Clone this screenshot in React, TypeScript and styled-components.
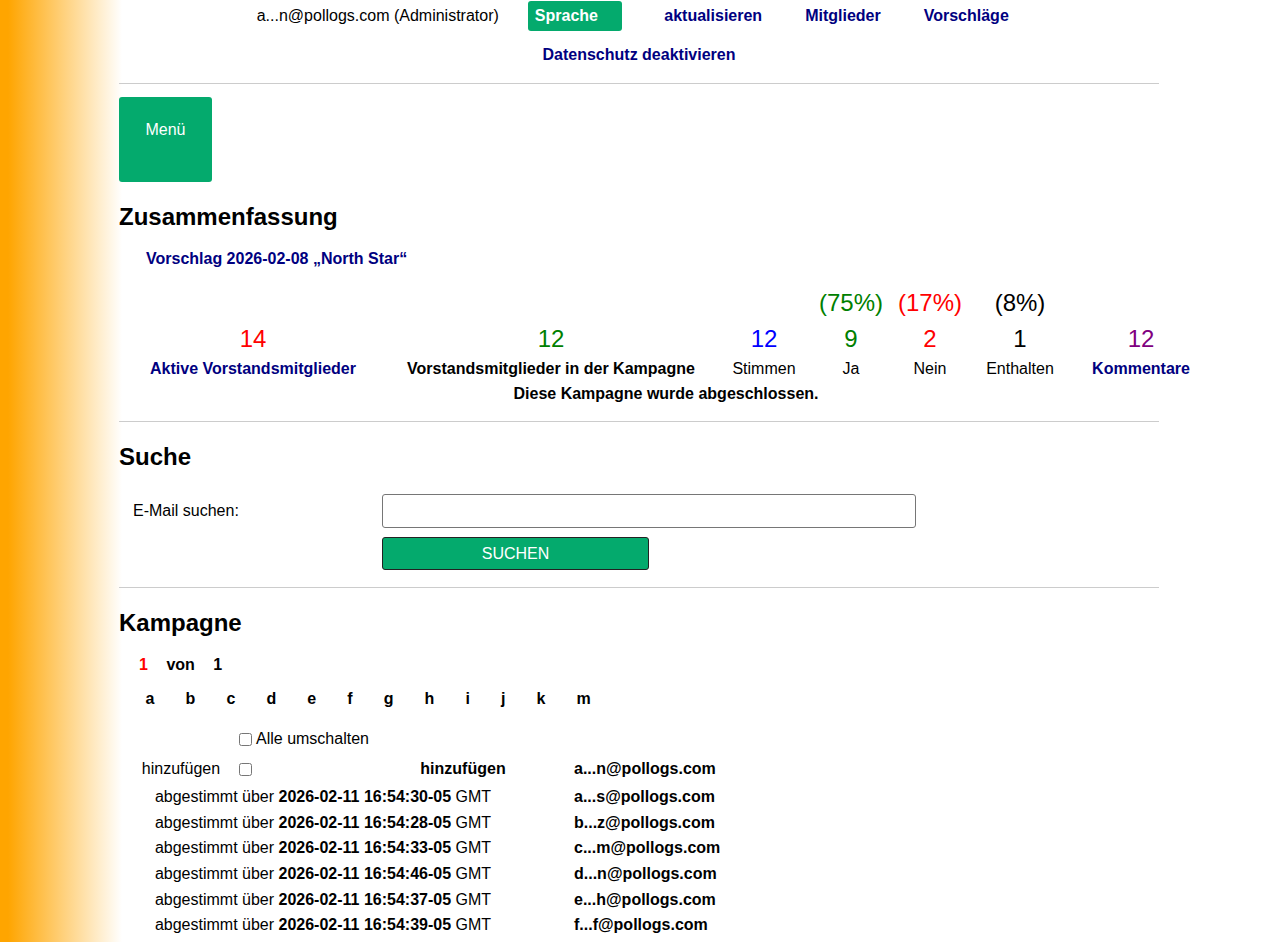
import { Fragment } from 'react'
import styled, { createGlobalStyle } from 'styled-components'

const green = '#04aa6d'
const navy = '#000080'

const GlobalStyle = createGlobalStyle`
    html, body {
        margin: 0;
        padding: 0;
        min-height: 100%;
    }
    body {
        font-family: 'Liberation Sans', Arial, sans-serif;
        font-size: 16px;
        color: #000;
        background: linear-gradient(to right, #ffa500 8px, #ffffff 122px) no-repeat;
        background-color: #fff;
        min-height: 942px;
    }
`

const stats = [
    { pct: '', num: '14', numColor: 'red', label: 'Aktive Vorstandsmitglieder', labelKind: 'link' },
    { pct: '', num: '12', numColor: 'green', label: 'Vorstandsmitglieder in der Kampagne', labelKind: 'bold' },
    { pct: '', num: '12', numColor: 'blue', label: 'Stimmen', labelKind: 'plain' },
    { pct: '(75%)', pctColor: 'green', num: '9', numColor: 'green', label: 'Ja', labelKind: 'plain' },
    { pct: '(17%)', pctColor: 'red', num: '2', numColor: 'red', label: 'Nein', labelKind: 'plain' },
    { pct: '(8%)', pctColor: 'black', num: '1', numColor: 'black', label: 'Enthalten', labelKind: 'plain' },
    { pct: '', num: '12', numColor: 'purple', label: 'Kommentare', labelKind: 'link' },
]

const letters = ['a', 'b', 'c', 'd', 'e', 'f', 'g', 'h', 'i', 'j', 'k', 'm']

const votes = [
    { time: '2026-02-11 16:54:30-05', email: 'a...s@pollogs.com' },
    { time: '2026-02-11 16:54:28-05', email: 'b...z@pollogs.com' },
    { time: '2026-02-11 16:54:33-05', email: 'c...m@pollogs.com' },
    { time: '2026-02-11 16:54:46-05', email: 'd...n@pollogs.com' },
    { time: '2026-02-11 16:54:37-05', email: 'e...h@pollogs.com' },
    { time: '2026-02-11 16:54:39-05', email: 'f...f@pollogs.com' },
]

export default function App() {
    return (
        <>
            <GlobalStyle />
            <Page>
                <TopNav>
                    <UserLabel>a...n@pollogs.com (Administrator)</UserLabel>
                    <LangButton>Sprache</LangButton>
                    <NavLink>aktualisieren</NavLink>
                    <NavLink>Mitglieder</NavLink>
                    <NavLink>Vorschläge</NavLink>
                </TopNav>
                <SubNav>
                    <NavLink $flush>Datenschutz deaktivieren</NavLink>
                </SubNav>
                <Rule $top={18} />

                <MenuButton>Menü</MenuButton>

                <Heading $top={21}>Zusammenfassung</Heading>
                <ProposalLink>Vorschlag 2026-02-08 „North Star“</ProposalLink>

                <StatsGrid>
                    {stats.map((s, i) => (
                        <Pct key={'p' + i} $color={s.pctColor}>
                            {s.pct}
                        </Pct>
                    ))}
                    {stats.map((s, i) => (
                        <Num key={'n' + i} $color={s.numColor}>
                            {s.num}
                        </Num>
                    ))}
                    {stats.map((s, i) => (
                        <StatLabel key={'l' + i} $kind={s.labelKind}>
                            {s.label}
                        </StatLabel>
                    ))}
                    <ClosedNote>Diese Kampagne wurde abgeschlossen.</ClosedNote>
                </StatsGrid>

                <Rule $top={17} />

                <Heading $top={21}>Suche</Heading>
                <SearchForm>
                    <SearchLabel>E-Mail suchen:</SearchLabel>
                    <SearchInput type='text' />
                    <span />
                    <SearchButton>SUCHEN</SearchButton>
                </SearchForm>

                <Rule $top={17} />

                <Heading $top={21}>Kampagne</Heading>
                <Pager>
                    <PageNum $current>1</PageNum>
                    <PageNum>von</PageNum>
                    <PageNum>1</PageNum>
                </Pager>
                <LetterBar>
                    {letters.map(l => (
                        <Letter key={l}>{l}</Letter>
                    ))}
                </LetterBar>

                <VoteTable>
                    <Cell />
                    <ToggleCell>
                        <Box type='checkbox' />
                        Alle umschalten
                    </ToggleCell>
                    <Cell />
                    <Cell />

                    <AddCell>hinzufügen</AddCell>
                    <ToggleCell>
                        <Box type='checkbox' />
                    </ToggleCell>
                    <AddHead>hinzufügen</AddHead>
                    <EmailCell>a...n@pollogs.com</EmailCell>

                    {votes.map(v => (
                        <Fragment key={v.email}>
                            <VoteText>
                                abgestimmt über <b>{v.time}</b> GMT
                            </VoteText>
                            <EmailCell>{v.email}</EmailCell>
                        </Fragment>
                    ))}
                </VoteTable>
            </Page>
        </>
    )
}

const Page = styled('div')`
    width: 1040px;
    margin: 0 0 0 119px;
    padding-bottom: 40px;
`

const TopNav = styled('div')`
    display: flex;
    align-items: center;
    justify-content: center;
    height: 30px;
    margin-top: 1px;
    padding-left: 9px;
`

const UserLabel = styled('span')`
    margin-right: 29px;
`

const LangButton = styled('button')`
    width: 94px;
    height: 30px;
    padding: 0 0 0 7px;
    margin-right: 21px;
    border: none;
    border-radius: 3px;
    background: ${green};
    color: #fff;
    font: bold 16px 'Liberation Sans', Arial, sans-serif;
    text-align: left;
`

const NavLink = styled('a')<{ $flush?: boolean }>`
    color: ${navy};
    font-weight: bold;
    text-decoration: none;
    padding: ${({ $flush }) => ($flush ? '0' : '0 21.5px')};
    cursor: pointer;
`

const SubNav = styled('div')`
    display: flex;
    justify-content: center;
    margin-top: 14px;
    line-height: 20px;
`

const Rule = styled('hr')<{ $top: number }>`
    border: none;
    border-top: 1px solid #cccccc;
    margin: ${({ $top }) => $top}px 0 0;
    height: 0;
`

const MenuButton = styled('button')`
    display: flex;
    justify-content: center;
    align-items: flex-start;
    width: 93px;
    height: 85px;
    margin-top: 13px;
    padding: 24px 0 0;
    border: none;
    border-radius: 3px;
    background: ${green};
    color: #fff;
    font: 16px 'Liberation Sans', Arial, sans-serif;
    line-height: 18px;
`

const Heading = styled('h2')<{ $top: number }>`
    margin: ${({ $top }) => $top}px 0 0;
    font-size: 24px;
    line-height: 28px;
    font-weight: bold;
`

const ProposalLink = styled('a')`
    display: block;
    margin: 19px 0 0 27px;
    color: ${navy};
    font-weight: bold;
    line-height: 18px;
    text-decoration: none;
`

const StatsGrid = styled('div')`
    display: grid;
    grid-template-columns: 258px 338px 88px 86px 72px 108px 134px;
    margin: 21px 0 0 5px;
    width: max-content;
    text-align: center;
`

const Pct = styled('div')<{ $color?: string }>`
    font-size: 24px;
    line-height: 28px;
    color: ${({ $color }) => $color ?? 'black'};
    min-height: 28px;
`

const Num = styled('div')<{ $color: string }>`
    font-size: 24px;
    line-height: 28px;
    margin-top: 8px;
    color: ${({ $color }) => $color};
`

const StatLabel = styled('div')<{ $kind: string }>`
    line-height: 20px;
    margin-top: 6px;
    white-space: nowrap;
    font-weight: ${({ $kind }) => ($kind === 'plain' ? 'normal' : 'bold')};
    color: ${({ $kind }) => ($kind === 'link' ? navy : 'black')};
`

const ClosedNote = styled('div')`
    grid-column: 1 / -1;
    font-weight: bold;
    line-height: 20px;
    margin-top: 5px;
`

const SearchForm = styled('div')`
    display: grid;
    grid-template-columns: 263px 534px;
    row-gap: 9px;
    margin-top: 23px;
    align-items: center;
`

const SearchLabel = styled('label')`
    padding-left: 14px;
`

const SearchInput = styled('input')`
    box-sizing: border-box;
    width: 534px;
    height: 34px;
    border: 1px solid #767676;
    border-radius: 3px;
    font: 16px 'Liberation Sans', Arial, sans-serif;
    padding: 0 8px;
`

const SearchButton = styled('button')`
    box-sizing: border-box;
    width: 267px;
    height: 33px;
    border: 1px solid #222;
    border-radius: 3px;
    background: ${green};
    color: #fff;
    font: 16px 'Liberation Sans', Arial, sans-serif;
`

const Pager = styled('div')`
    display: flex;
    gap: 18.5px;
    margin: 19px 0 0 20px;
    line-height: 18px;
    font-weight: bold;
`

const PageNum = styled('span')<{ $current?: boolean }>`
    color: ${({ $current }) => ($current ? 'red' : 'black')};
`

const LetterBar = styled('div')`
    display: flex;
    margin: 16px 0 0 11px;
    line-height: 18px;
    font-weight: bold;
`

const Letter = styled('span')`
    padding: 0 15.55px;
    cursor: pointer;
`

const VoteTable = styled('div')`
    display: grid;
    grid-template-columns: 114px 166px 118px auto;
    grid-template-rows: 30px 30px 26px;
    grid-auto-rows: 25.6px;
    margin: 16px 0 0 5px;
    line-height: 18px;
    align-items: center;
`

const Cell = styled('div')``

const ToggleCell = styled('label')`
    display: flex;
    align-items: center;
    gap: 4px;
    padding-left: 1px;
`

const Box = styled('input')`
    width: 13px;
    height: 13px;
    margin: 0;
`

const AddCell = styled('div')`
    text-align: center;
`

const AddHead = styled('div')`
    text-align: center;
    font-weight: bold;
`

const EmailCell = styled('div')`
    padding-left: 52px;
    font-weight: bold;
`

const VoteText = styled('div')`
    grid-column: 1 / 4;
    text-align: center;
    white-space: nowrap;
`
